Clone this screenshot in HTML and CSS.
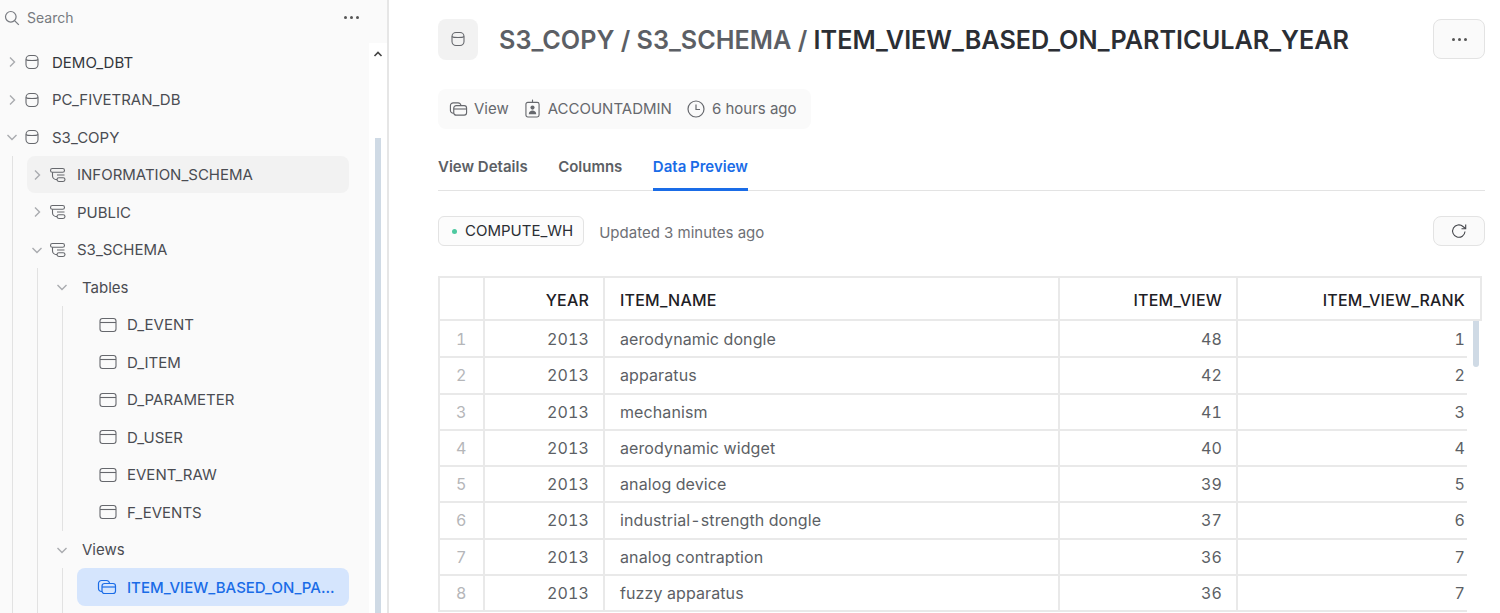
FILE: index.html
```html
<!DOCTYPE html>
<html lang="en">

<head>
    <meta charset="UTF-8">
    <title>ITEM_VIEW_BASED_ON_PARTICULAR_YEAR</title>
    <link rel="stylesheet" href="styles.css">
</head>

<body>
    <svg class="defs" width="0" height="0">
        <symbol id="i-chev-right" viewBox="0 0 12 12"><path d="M4 1.500 8.500 6 4 10.500" fill="none" stroke="currentColor" stroke-width="1.400"/></symbol>
        <symbol id="i-chev-down" viewBox="0 0 12 12"><path d="M1.500 4 6 8.500 10.500 4" fill="none" stroke="currentColor" stroke-width="1.400"/></symbol>
        <symbol id="i-db" viewBox="0 0 16 16"><g fill="none" stroke="currentColor" stroke-width="1.100"><rect x="2" y="1.500" width="12" height="13" rx="4"/><path d="M2 5.500c1.500 1.400 10.500 1.400 12 0"/></g></symbol>
        <symbol id="i-schema" viewBox="0 0 18 16"><g fill="none" stroke="currentColor" stroke-width="1.100"><rect x="1.500" y="1.500" width="14" height="3.800" rx="1.900"/><rect x="8" y="10.700" width="8" height="3.800" rx="1.900"/><path d="M3.500 5.300v3.400c0 2 1.500 3.900 4.500 3.900M8 8h7.500"/></g></symbol>
        <symbol id="i-table" viewBox="0 0 18 16"><g fill="none" stroke="currentColor" stroke-width="1.100"><rect x="1" y="1.500" width="16" height="13" rx="2.500"/><path d="M1 5.500h16"/></g></symbol>
        <symbol id="i-view" viewBox="0 0 20 16"><g fill="none" stroke="currentColor" stroke-width="1.200"><path d="M5 12.500H4.500a3 3 0 0 1-3-3V4.500a3 3 0 0 1 3-3h5a3 3 0 0 1 3 3"/><rect x="5" y="4.500" width="13.500" height="10" rx="2.500"/><path d="M5 8h13.500"/></g></symbol>
        <symbol id="i-badge" viewBox="0 0 16 20"><g fill="none" stroke="currentColor" stroke-width="1.200"><rect x="1" y="3.500" width="14" height="15.500" rx="2"/><path d="M8 .5v3"/></g><circle cx="8" cy="9" r="2.200" fill="currentColor"/><path d="M4 16c0-5 8-5 8 0z" fill="currentColor"/></symbol>
        <symbol id="i-clock" viewBox="0 0 18 18"><g fill="none" stroke="currentColor" stroke-width="1.200"><circle cx="9" cy="9" r="8"/><path d="M9 4.500V9.500h4"/></g></symbol>
        <symbol id="i-search" viewBox="0 0 16 16"><g fill="none" stroke="currentColor" stroke-width="1.200"><circle cx="6.800" cy="6.800" r="5.300"/><path d="m10.800 10.800 4 4"/></g></symbol>
        <symbol id="i-refresh" viewBox="0 0 16 16"><g fill="none" stroke="currentColor" stroke-width="1.100"><path d="M14 8.500A6.200 6.200 0 1 1 12 3.500L14.500 5.500"/><path d="M14.700 1.500v4.200h-4.200"/></g></symbol>
    </svg>

    <div class="app">
        <aside class="sidebar">
            <div class="search">
                <svg class="search-icon"><use href="#i-search"/></svg>
                <span class="search-text">Search</span>
                <span class="dots dots-side"><i></i><i></i><i></i></span>
            </div>
            <div class="tree-wrap">
                <div class="tree">
                    <div class="row"><svg class="chev"><use href="#i-chev-right"/></svg><svg class="ico-db"><use href="#i-db"/></svg><span class="label dark">DEMO_DBT</span></div>
                    <div class="row"><svg class="chev"><use href="#i-chev-right"/></svg><svg class="ico-db"><use href="#i-db"/></svg><span class="label">PC_FIVETRAN_DB</span></div>
                    <div class="row"><svg class="chev"><use href="#i-chev-down"/></svg><svg class="ico-db"><use href="#i-db"/></svg><span class="label">S3_COPY</span></div>
                    <div class="nested">
                        <div class="row hover"><svg class="chev"><use href="#i-chev-right"/></svg><svg class="ico-schema"><use href="#i-schema"/></svg><span class="label">INFORMATION_SCHEMA</span></div>
                        <div class="row"><svg class="chev"><use href="#i-chev-right"/></svg><svg class="ico-schema"><use href="#i-schema"/></svg><span class="label">PUBLIC</span></div>
                        <div class="row"><svg class="chev"><use href="#i-chev-down"/></svg><svg class="ico-schema"><use href="#i-schema"/></svg><span class="label">S3_SCHEMA</span></div>
                        <div class="nested">
                            <div class="row"><svg class="chev"><use href="#i-chev-down"/></svg><span class="label group">Tables</span></div>
                            <div class="nested">
                                <div class="row leaf"><svg class="ico-table"><use href="#i-table"/></svg><span class="label">D_EVENT</span></div>
                                <div class="row leaf"><svg class="ico-table"><use href="#i-table"/></svg><span class="label">D_ITEM</span></div>
                                <div class="row leaf"><svg class="ico-table"><use href="#i-table"/></svg><span class="label">D_PARAMETER</span></div>
                                <div class="row leaf"><svg class="ico-table"><use href="#i-table"/></svg><span class="label">D_USER</span></div>
                                <div class="row leaf"><svg class="ico-table"><use href="#i-table"/></svg><span class="label">EVENT_RAW</span></div>
                                <div class="row leaf"><svg class="ico-table"><use href="#i-table"/></svg><span class="label">F_EVENTS</span></div>
                            </div>
                            <div class="row"><svg class="chev"><use href="#i-chev-down"/></svg><span class="label group">Views</span></div>
                            <div class="nested">
                                <div class="row leaf selected"><svg class="ico-view"><use href="#i-view"/></svg><span class="label">ITEM_VIEW_BASED_ON_PA...</span></div>
                                <div class="row"></div>
                            </div>
                        </div>
                    </div>
                </div>
                <div class="side-scroll">
                    <svg class="side-arrow" viewBox="0 0 10 6"><path d="M1.500 5 5 1.500 8.500 5" fill="none" stroke="currentColor" stroke-width="1.600"/></svg>
                    <div class="side-thumb"></div>
                </div>
            </div>
        </aside>

        <main class="content">
            <header class="title-row">
                <div class="title-tile"><svg class="tile-icon"><use href="#i-db"/></svg></div>
                <h1 class="title"><span class="crumb">S3_COPY / S3_SCHEMA / </span>ITEM_VIEW_BASED_ON_PARTICULAR_YEAR</h1>
                <button class="btn btn-more"><span class="dots"><i></i><i></i><i></i></span></button>
            </header>

            <div class="meta">
                <span class="meta-item"><svg class="m-view"><use href="#i-view"/></svg>View</span>
                <span class="meta-item"><svg class="m-badge"><use href="#i-badge"/></svg>ACCOUNTADMIN</span>
                <span class="meta-item"><svg class="m-clock"><use href="#i-clock"/></svg>6 hours ago</span>
            </div>

            <nav class="tabs">
                <a class="tab">View Details</a>
                <a class="tab">Columns</a>
                <a class="tab active">Data Preview</a>
            </nav>

            <div class="toolbar">
                <span class="chip"><i class="dot"></i>COMPUTE_WH</span>
                <span class="updated">Updated 3 minutes ago</span>
                <button class="btn btn-refresh"><svg class="refresh"><use href="#i-refresh"/></svg></button>
            </div>

            <div class="grid">
                <table class="head-table">
                    <colgroup><col class="c-num"><col class="c-year"><col class="c-name"><col class="c-view"><col class="c-rank-h"></colgroup>
                    <tr><th></th><th class="r">YEAR</th><th>ITEM_NAME</th><th class="r">ITEM_VIEW</th><th class="r">ITEM_VIEW_RANK</th></tr>
                </table>
                <div class="grid-body">
                    <table class="body-table">
                        <colgroup><col class="c-num"><col class="c-year"><col class="c-name"><col class="c-view"><col class="c-rank"></colgroup>
                        <tr><td class="n">1</td><td class="r">2013</td><td>aerodynamic dongle</td><td class="r">48</td><td class="r">1</td></tr>
                        <tr><td class="n">2</td><td class="r">2013</td><td>apparatus</td><td class="r">42</td><td class="r">2</td></tr>
                        <tr><td class="n">3</td><td class="r">2013</td><td>mechanism</td><td class="r">41</td><td class="r">3</td></tr>
                        <tr><td class="n">4</td><td class="r">2013</td><td>aerodynamic widget</td><td class="r">40</td><td class="r">4</td></tr>
                        <tr><td class="n">5</td><td class="r">2013</td><td>analog device</td><td class="r">39</td><td class="r">5</td></tr>
                        <tr><td class="n">6</td><td class="r">2013</td><td>industrial-strength dongle</td><td class="r">37</td><td class="r">6</td></tr>
                        <tr><td class="n">7</td><td class="r">2013</td><td>analog contraption</td><td class="r">36</td><td class="r">7</td></tr>
                        <tr><td class="n">8</td><td class="r">2013</td><td>fuzzy apparatus</td><td class="r">36</td><td class="r">7</td></tr>
                    </table>
                    <div class="grid-scroll"><div class="grid-thumb"></div></div>
                </div>
            </div>
        </main>
    </div>
</body>

</html>
```

FILE: styles.css
```css
* {
    box-sizing: border-box;
}

html, body {
    margin: 0;
    height: 613px;
    overflow: hidden;
}

body {
    font-family: Inter, "Liberation Sans", sans-serif;
    font-size: 15px;
    color: #4a4c52;
    background: #fff;
}

.defs {
    position: absolute;
}

.app {
    display: flex;
    height: 613px;
}

/* sidebar */
.sidebar {
    width: 389px;
    flex: none;
    border-right: 2px solid #e6e6e6;
    display: flex;
    flex-direction: column;
    background: #fafafa;
    overflow: hidden;
}

.search {
    height: 43.25px;
    flex: none;
    padding: 0 28px 8px 4px;
    display: flex;
    align-items: center;
    color: #777a80;
}

.search-icon {
    width: 16px;
    height: 16px;
    margin-right: 7px;
}

.search-text {
    font-size: 14px;
    flex: 1;
}

.dots {
    display: flex;
    gap: 3px;
}

.dots i {
    width: 3px;
    height: 3px;
    border-radius: 50%;
    background: #555;
}

.tree-wrap {
    flex: 1;
    display: flex;
    min-height: 0;
}

.tree {
    width: 369px;
    flex: none;
    padding: 0 20px 0 2px;
}

.row {
    height: 37.500px;
    display: flex;
    align-items: center;
    padding-left: 4px;
    border-radius: 8px;
}

.row.hover {
    background: #f2f2f2;
}

.row.selected {
    background: #d5e5fd;
    color: #1a6ce7;
}

.row.leaf {
    padding-left: 22px;
}

.nested {
    margin-left: 10px;
    padding-left: 14px;
    border-left: 1px solid #e2e2e2;
}

.chev {
    width: 12px;
    height: 12px;
    color: #a9abaf;
    margin-right: 6px;
    flex: none;
}

.ico-db {
    width: 16px;
    height: 16px;
    color: #66686d;
    margin-right: 12px;
    flex: none;
}

.ico-schema {
    width: 18px;
    height: 16px;
    color: #66686d;
    margin-right: 10px;
    flex: none;
}

.ico-table {
    width: 18px;
    height: 16px;
    color: #66686d;
    margin-right: 10px;
    flex: none;
}

.ico-view {
    width: 20px;
    height: 16px;
    color: #1a6ce7;
    margin-left: -2px;
    margin-right: 10px;
    flex: none;
}

.label {
    white-space: nowrap;
}

.label.dark {
    color: #33363c;
}

.label.group {
    margin-left: 8px;
}

.selected .label {
    font-weight: 500;
}

.side-scroll {
    flex: 1;
    background: #fff;
    padding-left: 6px;
    color: #444;
}

.side-arrow {
    display: block;
    width: 10px;
    height: 6px;
    margin: 8px 0 0 -2px;
}

.side-thumb {
    width: 6px;
    height: 600px;
    margin-top: 81px;
    background: #cfdae5;
}

/* main */
.content {
    flex: 1;
    min-width: 0;
    padding: 19px 15px 0 49px;
}

.title-row {
    display: flex;
    align-items: center;
    height: 40px;
}

.title-tile {
    width: 40px;
    height: 41px;
    background: #f2f2f2;
    border-radius: 8px;
    display: flex;
    align-items: center;
    justify-content: center;
    flex: none;
    color: #66686d;
}

.tile-icon {
    width: 16px;
    height: 16px;
}

.title {
    flex: 1;
    margin: 0 0 0 21px;
    padding-top: 1px;
    font-size: 25.200px;
    font-weight: 600;
    color: #2b2e34;
    white-space: nowrap;
}

.crumb {
    color: #5c5f65;
}

.btn {
    width: 52px;
    flex: none;
    background: #fafafa;
    border: 1px solid #e3e3e3;
    border-radius: 8px;
    padding: 0;
    display: flex;
    align-items: center;
    justify-content: center;
}

.btn-more {
    height: 40px;
}

.meta {
    margin-top: 30px;
    width: 373px;
    height: 40px;
    background: #fafafa;
    border-radius: 8px;
    padding: 0 0 1px 11px;
    display: flex;
    align-items: center;
    gap: 16px;
    color: #66686d;
}

.meta-item {
    display: flex;
    align-items: center;
    white-space: nowrap;
}

.m-view {
    width: 19px;
    height: 16px;
    margin-right: 6px;
}

.m-badge {
    width: 15px;
    height: 19px;
    margin-right: 8px;
}

.m-clock {
    width: 18px;
    height: 18px;
    margin-left: -1px;
    margin-right: 7px;
}

.tabs {
    margin-top: 18px;
    height: 44px;
    display: flex;
    gap: 30.500px;
    border-bottom: 1px solid #e3e3e3;
}

.tab {
    font-weight: 600;
    color: #5c5f65;
    padding-top: 10px;
    margin-bottom: -1px;
}

.tab.active {
    color: #1a6ce7;
    border-bottom: 3px solid #1a6ce7;
}

.toolbar {
    margin-top: 25px;
    height: 30px;
    display: flex;
    align-items: center;
}

.chip {
    height: 30px;
    padding: 0 10px 2px 13px;
    display: flex;
    align-items: center;
    border: 1px solid #e3e3e3;
    border-radius: 6px;
    background: #fcfcfc;
    color: #2b2e34;
}

.dot {
    width: 5px;
    height: 5px;
    border-radius: 50%;
    background: #4ec9a0;
    margin-right: 8px;
    margin-top: 2px;
}

.updated {
    flex: 1;
    margin-left: 15px;
    padding-top: 2px;
    color: #6e7076;
}

.btn-refresh {
    height: 30px;
}

.refresh {
    width: 16px;
    height: 16px;
    color: #44464b;
}

/* data grid */
.grid {
    margin-top: 30px;
    font-size: 16px;
}

table {
    table-layout: fixed;
    border-collapse: collapse;
}

.head-table {
    width: 1042px;
}

.body-table {
    width: 1028px;
    flex: none;
}

.c-num { width: 45px; }
.c-year { width: 120px; }
.c-name { width: 455px; }
.c-view { width: 178px; }
.c-rank-h { width: 244px; }
.c-rank { width: 230px; }

th, td {
    border: 2px solid #e9e9e9;
    padding: 0 14px 0 15px;
    text-align: left;
    white-space: nowrap;
    font-variant-numeric: tabular-nums;
}

th {
    height: 43px;
    padding-top: 2px;
    font-weight: 500;
    color: #1e2025;
    letter-spacing: .2px;
}

td {
    height: 36.250px;
    color: #5c5f65;
    letter-spacing: .1px;
}

.body-table tr:first-child td {
    border-top: 0;
}

th:last-child {
    padding-right: 15px;
}

.body-table td:last-child {
    padding-right: 2px;
    border-right: 0;
}

.r {
    text-align: right;
}

td.n {
    color: #b5b6b9;
    padding-left: 16px;
}

.grid-body {
    display: flex;
}

.grid-scroll {
    width: 14px;
    flex: none;
    padding-left: 6px;
}

.grid-thumb {
    width: 6px;
    height: 46px;
    background: #cfdae5;
    border-radius: 0 0 3px 3px;
}
```
